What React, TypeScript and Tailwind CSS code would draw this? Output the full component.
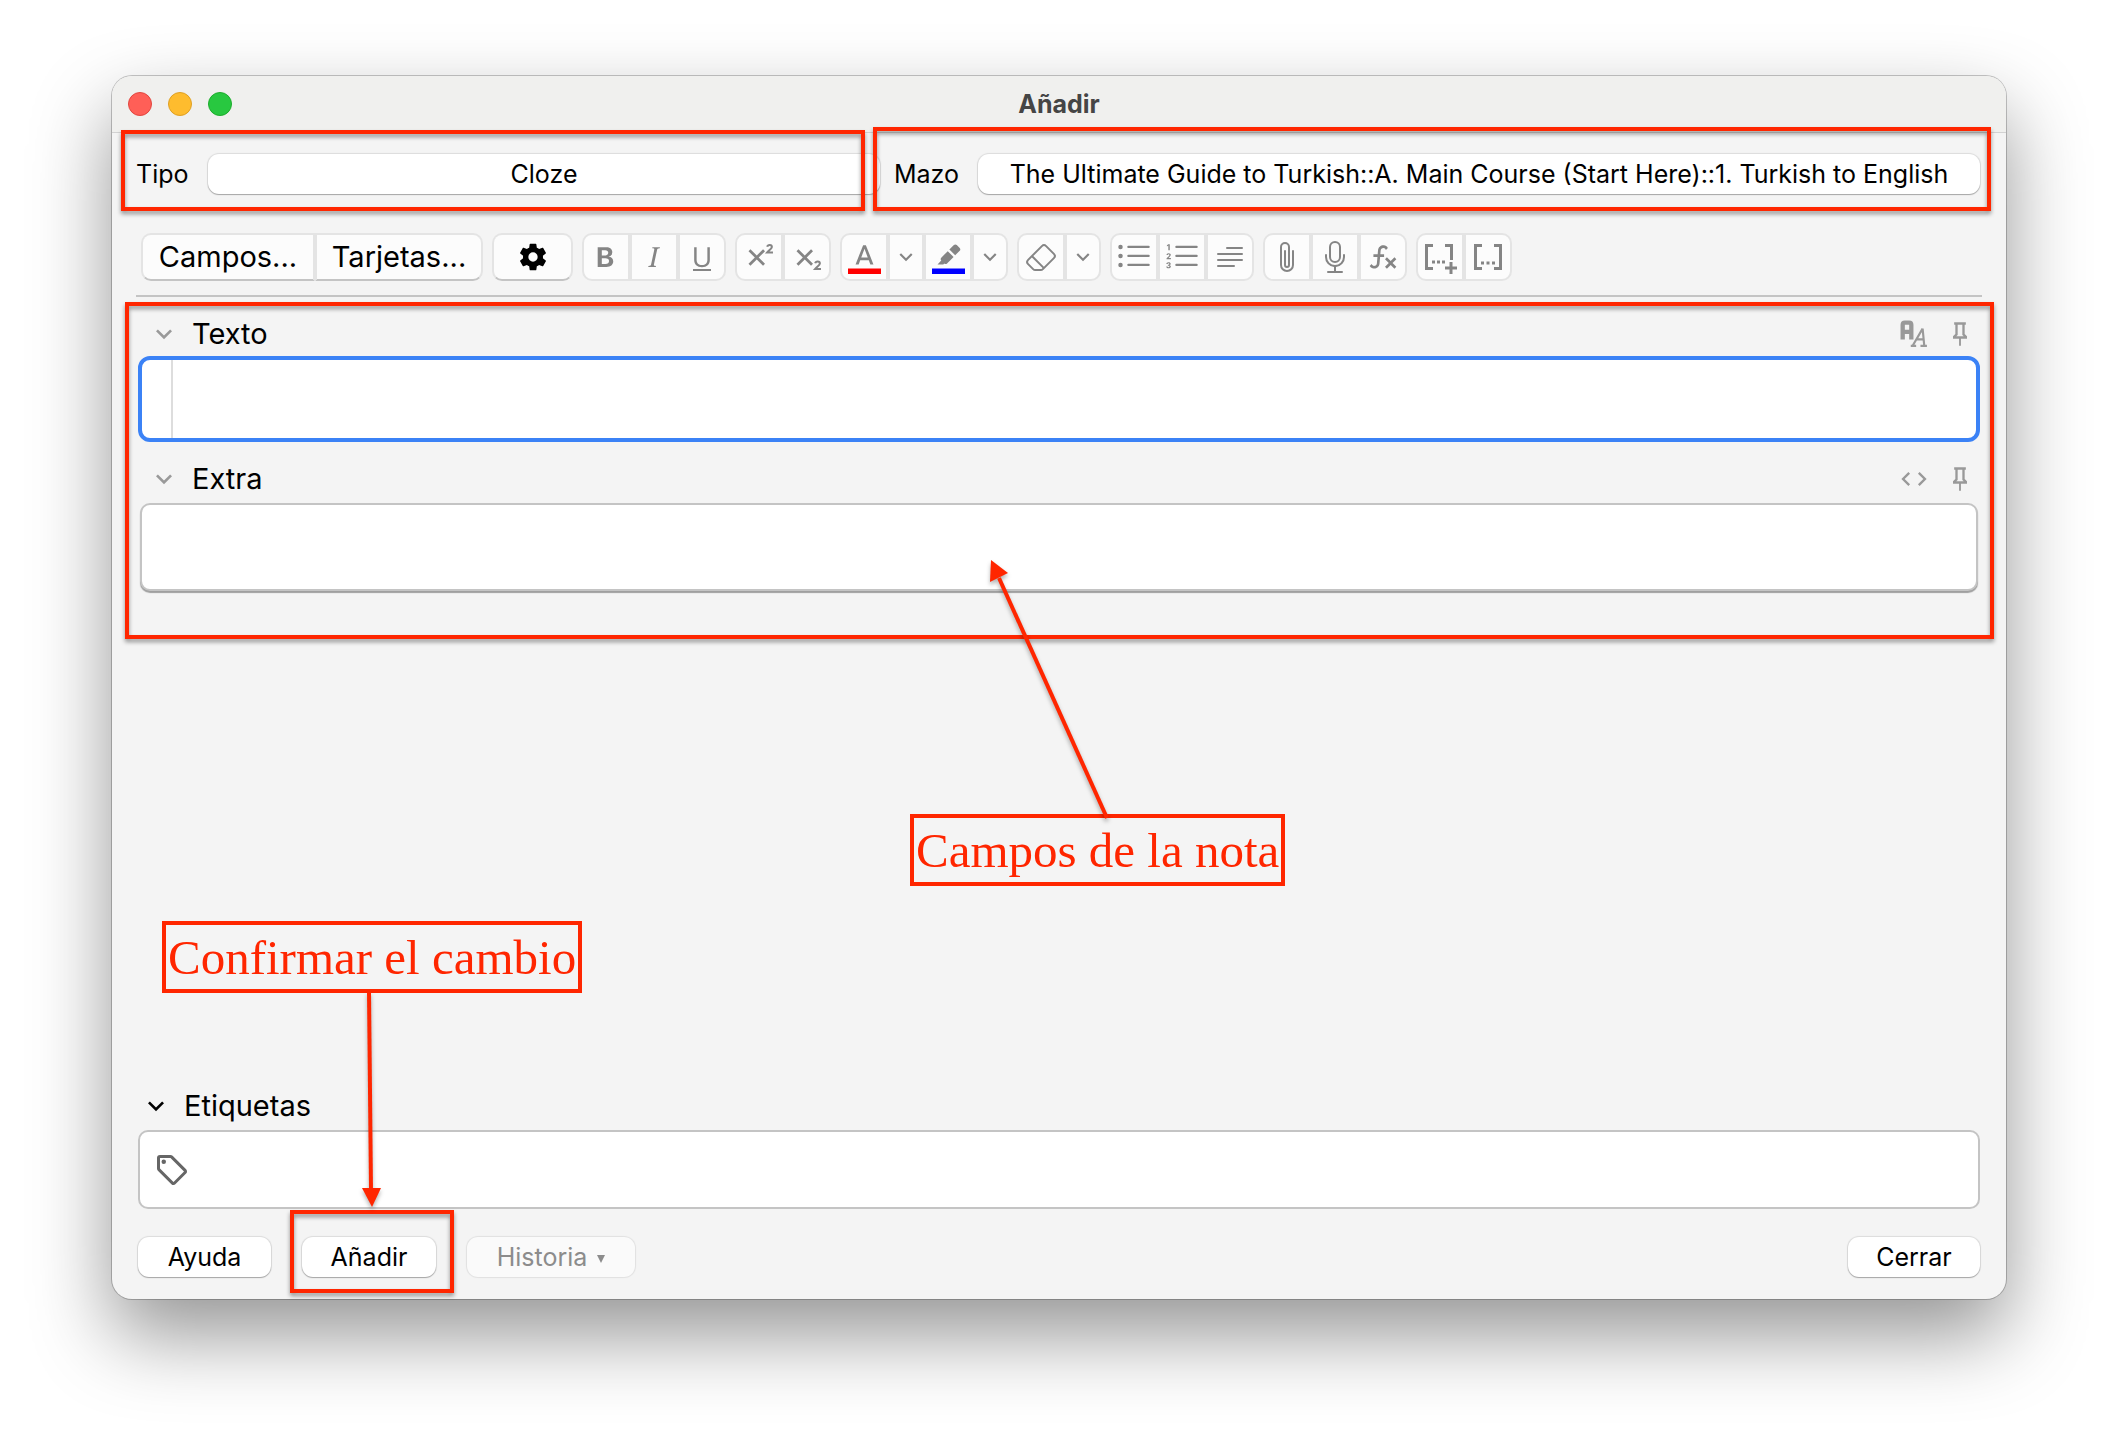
import type { ReactNode } from "react";
import {
  BsEraser,
  BsListOl,
  BsListUl,
  BsMic,
  BsPaperclip,
  BsTypeBold,
  BsTypeItalic,
  BsTypeUnderline,
} from "react-icons/bs";

const PATHS = {
  cog: "M12,15.5A3.5,3.5 0 0,1 8.5,12A3.5,3.5 0 0,1 12,8.5A3.5,3.5 0 0,1 15.5,12A3.5,3.5 0 0,1 12,15.5M19.43,12.97C19.47,12.65 19.5,12.33 19.5,12C19.5,11.67 19.47,11.34 19.43,11L21.54,9.37C21.73,9.22 21.78,8.95 21.66,8.73L19.66,5.27C19.54,5.05 19.27,4.96 19.05,5.05L16.56,6.05C16.04,5.66 15.5,5.32 14.87,5.07L14.5,2.42C14.46,2.18 14.25,2 14,2H10C9.75,2 9.54,2.18 9.5,2.42L9.13,5.07C8.5,5.32 7.96,5.66 7.44,6.05L4.95,5.05C4.73,4.96 4.46,5.05 4.34,5.27L2.34,8.73C2.21,8.95 2.27,9.22 2.46,9.37L4.57,11C4.53,11.34 4.5,11.67 4.5,12C4.5,12.33 4.53,12.65 4.57,12.97L2.46,14.63C2.27,14.78 2.21,15.05 2.34,15.27L4.34,18.73C4.46,18.95 4.73,19.03 4.95,18.95L7.44,17.94C7.96,18.34 8.5,18.68 9.13,18.93L9.5,21.58C9.54,21.82 9.75,22 10,22H14C14.25,22 14.46,21.82 14.5,21.58L14.87,18.93C15.5,18.67 16.04,18.34 16.56,17.94L19.05,18.95C19.27,19.03 19.54,18.95 19.66,18.73L21.66,15.27C21.78,15.05 21.73,14.78 21.54,14.63L19.43,12.97Z",
  chevron: "M7.41,8.58L12,13.17L16.59,8.58L18,10L12,16L6,10L7.41,8.58Z",
  fx: "M12.42,5.29C11.32,5.19 10.35,6 10.25,7.11L10,10H12.82V12H9.82L9.38,17.07C9.18,19.27 7.24,20.9 5.04,20.7C3.79,20.59 2.66,19.9 2,18.83L3.5,17.33C3.83,18.38 4.96,18.97 6,18.63C6.78,18.39 7.33,17.7 7.4,16.89L7.82,12H4.82V10H8L8.27,6.93C8.46,4.73 10.39,3.1 12.6,3.28C13.86,3.39 15,4.09 15.66,5.17L14.16,6.67C13.91,5.9 13.23,5.36 12.42,5.29M22,13.65L20.59,12.24L17.76,15.07L14.93,12.24L13.5,13.65L16.35,16.5L13.5,19.33L14.93,20.74L17.76,17.91L20.59,20.74L22,19.33L19.17,16.5L22,13.65Z",
  pin: "M16,12V4H17V2H7V4H8V12L6,14V16H11.2V22H12.8V16H18V14L16,12M8.8,14L10,12.8V4H14V12.8L15.2,14H8.8Z",
  code: "M8.59,16.58L4,12L8.59,7.42L7.17,6L1.17,12L7.17,18L8.59,16.58M15.41,16.58L20,12L15.41,7.42L16.83,6L22.83,12L16.83,18L15.41,16.58Z",
  tag: "M21.41 11.58L12.41 2.58A2 2 0 0 0 11 2H4A2 2 0 0 0 2 4V11A2 2 0 0 0 2.59 12.42L11.59 21.42A2 2 0 0 0 13 22A2 2 0 0 0 14.41 21.41L21.41 14.41A2 2 0 0 0 22 13A2 2 0 0 0 21.41 11.58M13 20L4 11V4H11L20 13M6.5 5A1.5 1.5 0 1 1 5 6.5A1.5 1.5 0 0 1 6.5 5Z",
  textColor: "M9.62,12L12,5.67L14.37,12M11,3L5.5,17H7.75L8.87,14H15.12L16.25,17H18.5L13,3H11Z",
  highlight:
    "M4,17L6.75,14.25L6.72,14.23C6.14,13.64 6.14,12.69 6.72,12.11L11.46,7.37L15.7,11.61L10.96,16.35C10.39,16.93 9.46,16.93 8.87,16.37L8.24,17H4M15.91,2.91C16.5,2.33 17.45,2.33 18.03,2.91L20.16,5.03C20.74,5.62 20.74,6.57 20.16,7.16L16.86,10.45L12.62,6.21L15.91,2.91Z",
  cross: "M16,7.41L11.41,12L16,16.59L14.59,18L10,13.41L5.41,18L4,16.59L8.59,12L4,7.41L5.41,6L10,10.59L14.59,6L16,7.41Z",
};

function Icon({ d, className, children }: { d?: string; className: string; children?: ReactNode }) {
  return (
    <svg viewBox="0 0 24 24" fill="currentColor" className={className} aria-hidden="true">
      {d && <path d={d} />}
      {children}
    </svg>
  );
}

function Group({ children, strong = false }: { children: ReactNode; strong?: boolean }) {
  return (
    <div
      className={`flex h-12 *:flex *:items-center *:justify-center *:border-2 *:border-[#e4e4e4] *:bg-[#fcfcfc] *:first:rounded-l-[10px] *:last:rounded-r-[10px] ${
        strong ? "text-black *:border-b-[#c4c4c4]" : "text-[#858585]"
      }`}
    >
      {children}
    </div>
  );
}

function Tool({ label, children }: { label: string; children: ReactNode }) {
  return (
    <button type="button" aria-label={label} className="w-12">
      {children}
    </button>
  );
}

function More({ label }: { label: string }) {
  return (
    <button type="button" aria-label={label} className="w-9">
      <Icon d={PATHS.chevron} className="size-[26px]" />
    </button>
  );
}

function PushButton({ children, className = "" }: { children: ReactNode; className?: string }) {
  return (
    <button
      type="button"
      className={`h-10 overflow-hidden rounded-[11px] bg-white text-[25px] leading-8 whitespace-nowrap shadow-[0_0_1px_1px_rgba(0,0,0,0.1),0_1px_1px_rgba(0,0,0,0.25)] ${className}`}
    >
      {children}
    </button>
  );
}

function Highlight({ className }: { className: string }) {
  return (
    <div
      className={`pointer-events-none absolute z-10 border-4 border-[#ff2600] drop-shadow-[0_3px_2px_rgba(0,0,0,0.4)] ${className}`}
    />
  );
}

function FieldHeader({ id, label, children }: { id: string; label: string; children: ReactNode }) {
  return (
    <div className="flex h-[59px] items-center pt-[14px] pr-[6px] pl-[10px] text-[#999]">
      <button type="button" aria-label={`Contraer ${label}`}>
        <Icon d={PATHS.chevron} className="size-8" />
      </button>
      <label htmlFor={id} className="ml-3 text-[29px] leading-9 text-black">
        {label}
      </label>
      <div className="ml-auto flex items-center gap-[18px]">
        {children}
        <button type="button" aria-label={`Fijar ${label}`}>
          <Icon d={PATHS.pin} className="size-7" />
        </button>
      </div>
    </div>
  );
}

export default function App() {
  return (
    <div className="flex min-h-screen flex-col bg-white px-28 pt-[76px] pb-[147px] font-[Inter,sans-serif] text-black">
      <main className="relative flex flex-1 flex-col rounded-[20px] bg-[#f4f4f4] shadow-[0_0_0_1px_rgba(0,0,0,0.22),0_36px_80px_rgba(0,0,0,0.42)]">
        <header className="grid h-[57px] grid-cols-3 items-center rounded-t-[20px] border-b border-[#d2d2d2] bg-[#f0f0ee] px-4">
          <div className="flex gap-4">
            <button type="button" aria-label="Cerrar ventana" className="size-6 rounded-full border border-[#e2463f] bg-[#ff5f57]" />
            <button type="button" aria-label="Minimizar" className="size-6 rounded-full border border-[#dfa023] bg-[#febc2e]" />
            <button type="button" aria-label="Ampliar" className="size-6 rounded-full border border-[#1dad2c] bg-[#28c840]" />
          </div>
          <h1 className="text-center text-[25px] leading-8 font-bold text-[#454545]">Añadir</h1>
        </header>

        <div className="flex flex-1 flex-col px-[26px] pt-[21px] pb-[22px]">
          <div className="grid grid-cols-[742fr_1086fr] gap-[14px]">
            <div className="relative -ml-0.5 flex items-center">
              <span className="w-[72px] text-[25px] leading-8">Tipo</span>
              <PushButton className="flex-1">Cloze</PushButton>
              <Highlight className="-top-6 right-[15px] -bottom-[17px] -left-[15px]" />
            </div>
            <div className="relative flex items-center">
              <span className="w-[84px] text-[25px] leading-8">Mazo</span>
              <PushButton className="flex-1">
                The Ultimate Guide to Turkish::A. Main Course (Start Here)::1. Turkish to English
              </PushButton>
              <Highlight className="-top-[27px] -right-[11px] -bottom-[17px] -left-[21px]" />
            </div>
          </div>

          <div className="mt-[39px] flex gap-[9px] pl-[3px]">
            <Group strong>
              <button type="button" className="w-[174px] text-[29px] leading-9">
                Campos...
              </button>
              <button type="button" className="w-[168px] text-[29px] leading-9">
                Tarjetas...
              </button>
            </Group>
            <Group strong>
              <button type="button" aria-label="Opciones" className="w-[81px]">
                <Icon d={PATHS.cog} className="size-8" />
              </button>
            </Group>
            <Group>
              <Tool label="Negrita"><BsTypeBold className="size-8" /></Tool>
              <Tool label="Cursiva"><BsTypeItalic className="size-8" /></Tool>
              <Tool label="Subrayado"><BsTypeUnderline className="size-8" /></Tool>
            </Group>
            <Group>
              <Tool label="Superíndice">
                <Icon d={PATHS.cross} className="size-[33px]">
                  <path d="M17.600 4.200C18 2.400 21 2.400 21 4.300C21 5.600 19 6.700 17.600 8.300H21.800" fill="none" stroke="currentColor" strokeWidth="1.500" />
                </Icon>
              </Tool>
              <Tool label="Subíndice">
                <Icon d={PATHS.cross} className="size-[33px]">
                  <path d="M17.600 16.200C18 14.400 21 14.400 21 16.300C21 17.600 19 18.700 17.600 20.300H21.800" fill="none" stroke="currentColor" strokeWidth="1.500" />
                </Icon>
              </Tool>
            </Group>
            <Group>
              <Tool label="Color del texto">
                <Icon d={PATHS.textColor} className="size-[33px]">
                  <rect y="20" width="24" height="4" fill="#ff0000" />
                </Icon>
              </Tool>
              <More label="Cambiar color del texto" />
              <Tool label="Color de resaltado">
                <Icon d={PATHS.highlight} className="size-[33px]">
                  <rect y="20" width="24" height="4" fill="#0000ff" />
                </Icon>
              </Tool>
              <More label="Cambiar color de resaltado" />
            </Group>
            <Group>
              <Tool label="Quitar formato"><BsEraser className="size-8" /></Tool>
              <More label="Elegir formato a quitar" />
            </Group>
            <Group>
              <Tool label="Lista con viñetas"><BsListUl className="size-9" /></Tool>
              <Tool label="Lista numerada"><BsListOl className="size-9" /></Tool>
              <Tool label="Alineación">
                <svg viewBox="0 0 26 22" className="h-[22px] w-[26px]" fill="none" stroke="currentColor" strokeWidth="2" strokeLinecap="round" aria-hidden="true">
                  <path d="M10 2H25M1 8H25M1 14H25M1 20H17" />
                </svg>
              </Tool>
            </Group>
            <Group>
              <Tool label="Adjuntar archivo"><BsPaperclip className="size-8" /></Tool>
              <Tool label="Grabar audio"><BsMic className="size-8" /></Tool>
              <Tool label="Ecuaciones"><Icon d={PATHS.fx} className="size-8" /></Tool>
            </Group>
            <Group>
              <Tool label="Hueco nuevo">
                <svg viewBox="0 0 34 34" className="size-[34px]" fill="none" stroke="currentColor" strokeWidth="3" aria-hidden="true">
                  <path d="M10 5.500H3.500V28.500H10M22 5.500H28.500V20M22 28H34M28 22V34" />
                  <path d="M9 22H12M14 22H17M19 22H22" />
                </svg>
              </Tool>
              <Tool label="Mismo hueco">
                <svg viewBox="0 0 34 34" className="size-[34px]" fill="none" stroke="currentColor" strokeWidth="3" aria-hidden="true">
                  <path d="M11 5.500H4.500V28.500H11M23 5.500H29.500V28.500H23" />
                  <path d="M10 23H13M15.500 23H18.500M21 23H24" />
                </svg>
              </Tool>
            </Group>
          </div>

          <hr className="-mx-0.5 mt-[14px] border-t-2 border-[#c4c4c4]" />

          <section className="relative pb-[46px]">
            <FieldHeader id="texto" label="Texto">
              <button type="button" aria-label="Modo de edición de Texto">
                <svg viewBox="0 0 26 26" className="size-7" fill="none" stroke="currentColor" aria-hidden="true">
                  <path d="M2.500 18V4.500Q2.500 2.500 4.500 2.500H8.500Q10.500 2.500 10.500 4.500V18M2.500 11H10.500" strokeWidth="4" />
                  <path d="M12 23.500L21 8M21 8L22.500 23.500M15 18H22M10 24H15M19 24H25" strokeWidth="2" />
                </svg>
              </button>
            </FieldHeader>
            <div className="flex h-[86px] overflow-hidden rounded-xl border-4 border-[#3b82f6] bg-white">
              <div className="w-[31px] border-r-2 border-[#ddd]" />
              <textarea id="texto" className="flex-1 resize-none p-2 text-[29px] outline-none" />
            </div>
            <FieldHeader id="extra" label="Extra">
              <button type="button" aria-label="Editar HTML de Extra">
                <Icon d={PATHS.code} className="size-7" />
              </button>
            </FieldHeader>
            <div className="m-0.5 flex h-[88px] overflow-hidden rounded-[10px] border-2 border-[#c4c4c4] bg-white shadow-[0_2px_1px_rgba(0,0,0,0.35)]">
              <textarea id="extra" className="flex-1 resize-none p-2 text-[29px] outline-none" />
            </div>
            <Highlight className="top-[5px] -right-[14px] bottom-0 -left-[13px]" />
          </section>

          <section className="mt-auto">
            <div className="flex items-center pb-[6px] pl-0.5">
              <button type="button" aria-label="Contraer Etiquetas">
                <Icon d={PATHS.chevron} className="size-8" />
              </button>
              <label htmlFor="etiquetas" className="ml-3 text-[29px] leading-9">
                Etiquetas
              </label>
            </div>
            <div className="flex h-[79px] items-center rounded-[10px] border-2 border-[#c4c4c4] bg-white pl-[14px] text-[#666]">
              <Icon d={PATHS.tag} className="size-9" />
              <input id="etiquetas" type="text" className="ml-2 flex-1 text-[29px] text-black outline-none" />
            </div>
          </section>

          <footer className="mt-7 flex items-center gap-[31px]">
            <PushButton className="w-[133px]">Ayuda</PushButton>
            <div className="relative flex">
              <PushButton className="w-[134px]">Añadir</PushButton>
              <Highlight className="-top-[27px] -right-[18px] -bottom-4 -left-3" />
            </div>
            <button
              type="button"
              disabled
              className="flex h-10 w-[168px] items-center justify-center gap-[10px] rounded-[11px] bg-[#fafafa] text-[25px] leading-8 text-[#8c8c8c] shadow-[0_0_1px_1px_rgba(0,0,0,0.08)]"
            >
              Historia
              <span className="mt-1 size-0 border-x-4 border-t-8 border-x-transparent border-t-[#8c8c8c]" />
            </button>
            <PushButton className="ml-auto w-[132px]">Cerrar</PushButton>
          </footer>
        </div>

        <div className="pointer-events-none absolute top-[738px] left-[798px] z-10 border-4 border-[#ff2600] px-0.5 pt-0.5 font-['Liberation_Serif',serif] text-[49px] leading-[62px] whitespace-nowrap text-[#ff2600]">
          Campos de la nota
        </div>
        <div className="pointer-events-none absolute top-[845px] left-[50px] z-10 border-4 border-[#ff2600] px-0.5 pt-0.5 font-['Liberation_Serif',serif] text-[49px] leading-[62px] whitespace-nowrap text-[#ff2600]">
          Confirmar el cambio
        </div>
        <svg
          viewBox="0 0 120 262"
          className="pointer-events-none absolute top-[484px] left-[877px] z-10 h-[262px] w-[120px] drop-shadow-[0_3px_2px_rgba(0,0,0,0.3)]"
          aria-hidden="true"
        >
          <path d="M118 258L10 18" stroke="#ff2600" strokeWidth="4" />
          <path d="M2 0L1 22L19 13Z" fill="#ff2600" />
        </svg>
        <svg
          viewBox="0 0 24 216"
          className="pointer-events-none absolute top-[916px] left-[248px] z-10 h-[216px] w-6 drop-shadow-[0_3px_2px_rgba(0,0,0,0.3)]"
          aria-hidden="true"
        >
          <path d="M9 0L11 198" stroke="#ff2600" strokeWidth="4" />
          <path d="M2 196H21L12 215Z" fill="#ff2600" />
        </svg>
      </main>
    </div>
  );
}
